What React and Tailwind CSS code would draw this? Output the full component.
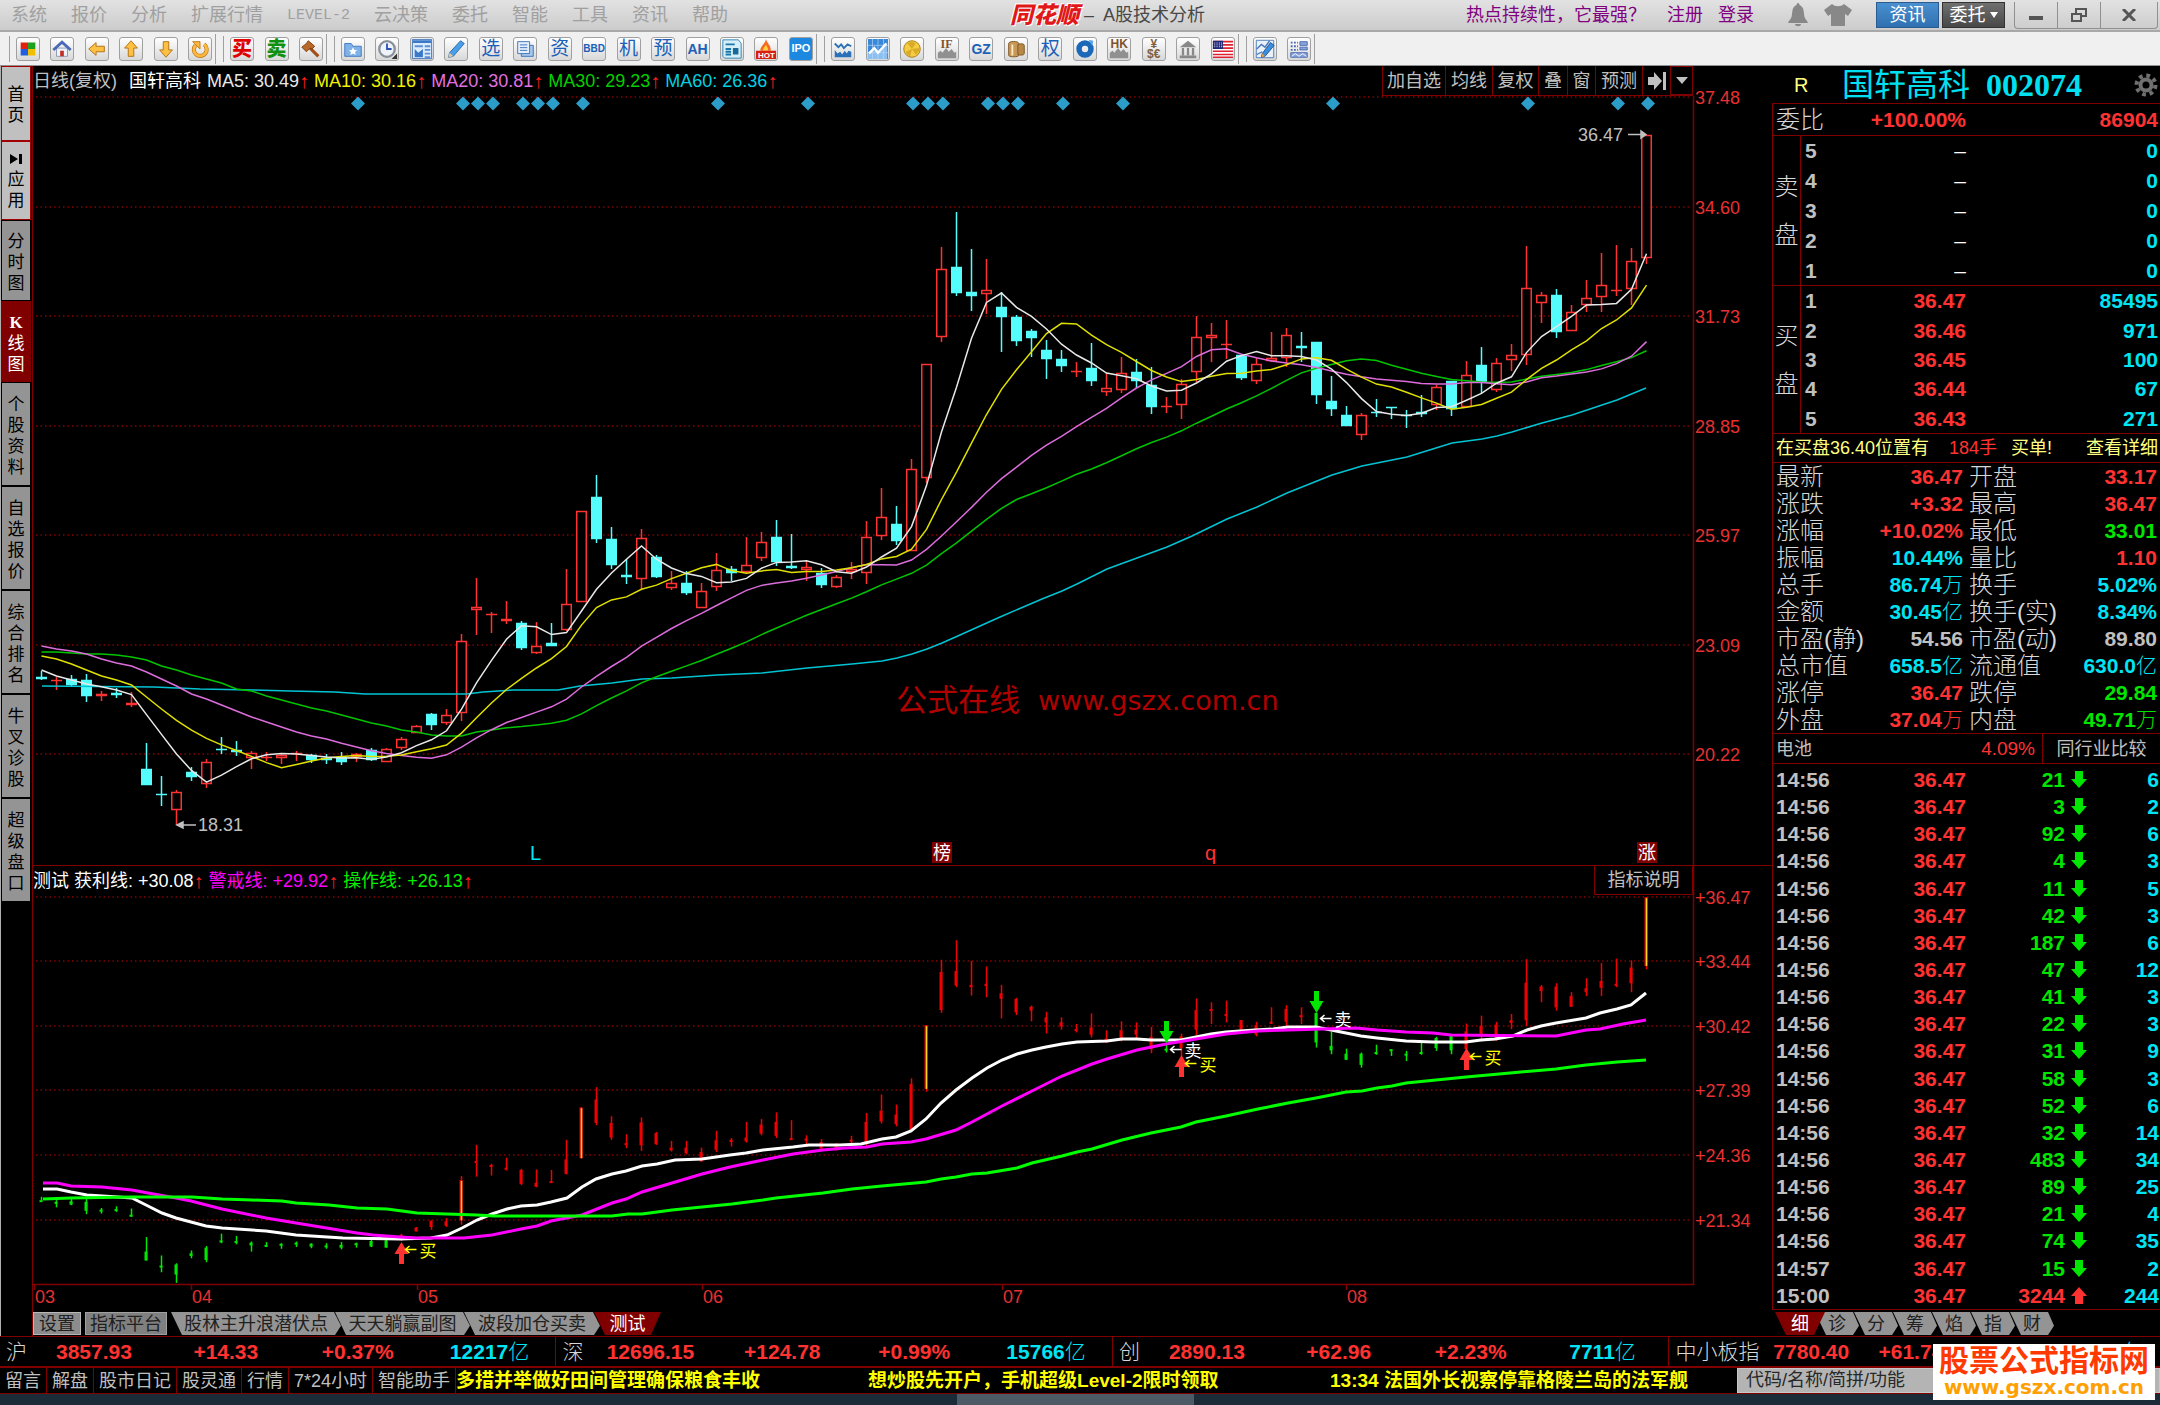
import React, { useState } from "react";
import clsx from "clsx";

const MENU = ["系统", "报价", "分析", "扩展行情", "LEVEL-2", "云决策", "委托", "智能", "工具", "资讯", "帮助"];

const SIDE_TABS = [
  { label: "首页", cls: "h-[75px] bg-[#c0c0c0] border-[#a00000]" },
  { label: "应用", icon: true, cls: "h-[79px] bg-[#c0c0c0] border-[#a00000]" },
  { label: "分时图", cls: "h-[81px] bg-[#949494] border-black" },
  { label: "K线图", active: true, cls: "h-[81px] bg-[#800000] text-white border-[#800000]" },
  { label: "个股资料", cls: "h-[104px] bg-[#949494] border-black" },
  { label: "自选报价", cls: "h-[104px] bg-[#949494] border-black" },
  { label: "综合排名", cls: "h-[104px] bg-[#949494] border-black" },
  { label: "牛叉诊股", cls: "h-[104px] bg-[#949494] border-black" },
  { label: "超级盘口", cls: "h-[104px] bg-[#949494] border-black" },
];

// [high, body top, body bottom, low, up?]
const BARS = [
  [671, 677, 679, 680, 0], [677, 680, 681, 690, 1], [675, 679, 685, 686, 0], [674, 680, 696, 702, 0],
  [691, 694, 696, 701, 1], [688, 693, 695, 698, 0], [692, 703, 705, 707, 1], [743, 769, 785, 785, 0],
  [776, 794, 795, 806, 0], [790, 792, 810, 825, 1], [767, 772, 777, 781, 0], [759, 762, 784, 788, 1],
  [737, 749, 750, 754, 0], [741, 750, 752, 756, 0], [751, 753, 758, 769, 1], [752, 757, 758, 761, 1],
  [754, 755, 758, 764, 1], [751, 753, 754, 761, 1], [754, 755, 760, 763, 0], [754, 758, 760, 764, 0],
  [752, 757, 762, 765, 0], [753, 754, 757, 762, 1], [748, 750, 760, 761, 0], [748, 749, 762, 762, 1],
  [737, 739, 748, 750, 1], [725, 726, 733, 733, 1], [713, 714, 725, 730, 0], [709, 715, 723, 725, 1],
  [634, 641, 713, 721, 1], [578, 607, 610, 635, 1], [612, 614, 615, 633, 1], [601, 619, 621, 624, 1],
  [621, 623, 648, 650, 0], [622, 646, 653, 654, 1], [623, 643, 646, 646, 0], [569, 604, 630, 631, 1],
  [511, 511, 602, 602, 1], [475, 497, 539, 543, 0], [527, 539, 565, 569, 0], [559, 575, 577, 584, 0],
  [529, 538, 579, 589, 1], [555, 557, 577, 578, 0], [571, 583, 588, 590, 1], [571, 583, 593, 595, 0],
  [583, 591, 608, 608, 1], [553, 570, 587, 591, 1], [566, 569, 573, 581, 0], [537, 565, 572, 574, 1],
  [532, 542, 558, 561, 1], [520, 537, 562, 566, 0], [534, 566, 568, 569, 0], [561, 567, 570, 581, 1],
  [568, 573, 585, 588, 0], [575, 577, 587, 588, 1], [562, 569, 572, 579, 1], [521, 537, 573, 584, 1],
  [488, 517, 536, 540, 1], [506, 524, 541, 545, 0], [459, 469, 551, 551, 1], [364, 364, 478, 483, 1],
  [247, 269, 337, 342, 1], [212, 267, 293, 296, 0], [249, 292, 296, 311, 0], [259, 290, 294, 314, 1],
  [292, 307, 317, 352, 0], [315, 317, 341, 346, 0], [329, 331, 338, 357, 0], [340, 350, 359, 379, 0],
  [350, 359, 366, 372, 0], [362, 371, 372, 377, 1], [343, 368, 381, 386, 0], [373, 388, 392, 396, 1],
  [357, 373, 390, 393, 1], [359, 372, 381, 388, 0], [367, 385, 407, 414, 0], [397, 406, 407, 413, 1],
  [379, 384, 405, 419, 1], [316, 337, 372, 382, 1], [323, 335, 338, 362, 1], [320, 344, 345, 359, 1],
  [355, 355, 378, 380, 0], [358, 364, 381, 384, 1], [332, 358, 361, 362, 1], [328, 335, 358, 367, 1],
  [332, 346, 348, 362, 0], [342, 342, 395, 404, 0], [376, 401, 409, 416, 0], [406, 415, 426, 426, 0],
  [413, 415, 435, 440, 1], [399, 412, 413, 417, 0], [407, 407, 408, 419, 0], [410, 415, 416, 428, 0],
  [395, 412, 414, 417, 0], [385, 387, 405, 410, 1], [381, 381, 409, 416, 0], [361, 375, 407, 407, 1],
  [347, 365, 382, 393, 0], [358, 363, 390, 392, 1], [344, 355, 360, 371, 1], [246, 288, 355, 365, 1],
  [292, 295, 303, 323, 1], [289, 295, 332, 338, 0], [305, 312, 331, 331, 1], [280, 298, 305, 312, 1],
  [253, 285, 297, 312, 1], [245, 290, 291, 296, 1], [248, 261, 289, 305, 1], [135, 135, 258, 264, 1],
];

// values that precede the first full averaging window
const LEAD = {
  5: [670, 676, 680, 684],
  10: [656, 659, 664, 670, 676, 680, 685, 697, 709],
  20: [646, 649, 651, 654, 659, 663, 666, 672, 679, 686, 694, 699, 705, 711, 717, 722, 727, 732, 736],
  30: [652, 652, 653, 654, 654, 655, 657, 660, 666, 670, 675, 679, 683, 689, 691, 696, 700, 704, 708, 711, 715, 719, 723, 726, 730, 732, 735, 736, 736],
};

const MA60 =
  "42,686 154,687 200,689 252,690 290,691 335,692 365,694 467,694 483,692 513,690 558,690 580,686 612,683 642,679 672,678 717,675 762,673 807,668 852,664 882,661 897,658 912,654 927,649 942,643 960,635 1000,617 1042,599 1062,591 1077,584 1107,569 1137,558 1167,547 1192,536 1227,519 1257,507 1287,493 1317,481 1332,475 1362,466 1407,457 1452,443 1482,439 1497,436 1512,432 1542,423 1572,415 1602,405 1617,400 1646,388";

const PROFIT =
  "43,1189 57,1189 71,1192 87,1195 118,1197 132,1198 148,1206 162,1213 176,1218 191,1222 206,1226 222,1228 266,1231 296,1235 343,1238 400,1239 431,1238 447,1235 462,1228 477,1220 492,1214 507,1209 521,1206 537,1205 551,1202 567,1198 582,1187 596,1179 612,1174 626,1171 642,1166 657,1164 675,1160 702,1159 730,1155 746,1153 763,1150 793,1147 809,1145 840,1145 861,1144 882,1139 896,1137 911,1131 926,1119 941,1103 956,1090 972,1078 987,1068 1002,1060 1017,1054 1032,1050 1046,1047 1062,1044 1077,1042 1107,1041 1122,1039 1137,1039 1151,1040 1181,1040 1196,1037 1211,1034 1226,1032 1255,1030 1273,1029 1288,1027 1316,1027 1331,1030 1346,1033 1361,1036 1377,1038 1406,1041 1433,1042 1466,1042 1481,1040 1495,1039 1513,1036 1527,1030 1541,1026 1556,1023 1586,1018 1600,1013 1617,1009 1631,1005 1646,993";
const WARNING =
  "43,1183 57,1183 71,1186 102,1187 132,1190 148,1193 176,1198 191,1201 222,1209 266,1218 296,1223 357,1233 373,1235 400,1237 417,1238 464,1238 492,1235 521,1229 537,1226 551,1221 582,1215 612,1203 626,1199 642,1192 672,1183 702,1174 730,1167 763,1160 793,1154 823,1150 845,1148 867,1147 882,1144 911,1142 926,1139 956,1130 972,1122 1002,1106 1032,1091 1062,1076 1092,1064 1107,1059 1137,1050 1166,1044 1196,1039 1226,1034 1258,1031 1288,1030 1356,1028 1377,1030 1406,1032 1433,1033 1451,1035 1556,1036 1571,1033 1586,1030 1600,1029 1623,1024 1646,1020";
const ACTION =
  "43,1199 71,1198 132,1197 192,1197 222,1199 252,1200 282,1201 296,1203 329,1205 357,1208 387,1209 417,1213 477,1215 494,1216 612,1216 628,1214 642,1214 672,1210 702,1207 732,1204 763,1200 776,1198 823,1193 852,1189 882,1186 926,1182 941,1179 956,1177 972,1174 987,1173 1017,1168 1032,1163 1062,1156 1077,1152 1092,1149 1122,1140 1151,1133 1181,1127 1196,1122 1226,1116 1258,1109 1288,1103 1316,1098 1346,1092 1362,1091 1377,1088 1392,1086 1406,1083 1436,1080 1466,1077 1510,1073 1556,1069 1586,1065 1617,1062 1646,1060";

const DIAMONDS = [358, 463, 478, 493, 523, 538, 553, 583, 718, 808, 913, 928, 943, 988, 1003, 1018, 1063, 1123, 1333, 1528, 1618, 1648];

const barX = (i) => 41.5 + 15 * i;
const lowerY = (y) => 897 + (y - 134.7) * 0.559;
const isGreen = (i) => i < 24 || i === 75 || (i >= 85 && i <= 94);
const LIMIT_UP = [28, 36, 59, 107];

function movingAverage(n) {
  const closes = BARS.map((b) => (b[4] ? b[1] : b[2]));
  return closes
    .map((_, i) => {
      const y = i < n - 1 ? LEAD[n][i] : closes.slice(i - n + 1, i + 1).reduce((a, b) => a + b, 0) / n;
      return `${barX(i)},${y.toFixed(1)}`;
    })
    .join(" ");
}

const QUOTES = [
  ["最新", "36.47", "", "r", "开盘", "33.17", "", "r"],
  ["涨跌", "+3.32", "", "r", "最高", "36.47", "", "r"],
  ["涨幅", "+10.02%", "", "r", "最低", "33.01", "", "g"],
  ["振幅", "10.44%", "", "c", "量比", "1.10", "", "r"],
  ["总手", "86.74", "万", "c", "换手", "5.02%", "", "c"],
  ["金额", "30.45", "亿", "c", "换手(实)", "8.34%", "", "c"],
  ["市盈(静)", "54.56", "", "w", "市盈(动)", "89.80", "", "w"],
  ["总市值", "658.5", "亿", "c", "流通值", "630.0", "亿", "c"],
  ["涨停", "36.47", "", "r", "跌停", "29.84", "", "g"],
  ["外盘", "37.04", "万", "r", "内盘", "49.71", "万", "g"],
];

const TICKS = [
  ["14:56", 21, 6], ["14:56", 3, 2], ["14:56", 92, 6], ["14:56", 4, 3], ["14:56", 11, 5],
  ["14:56", 42, 3], ["14:56", 187, 6], ["14:56", 47, 12], ["14:56", 41, 3], ["14:56", 22, 3],
  ["14:56", 31, 9], ["14:56", 58, 3], ["14:56", 52, 6], ["14:56", 32, 14], ["14:56", 483, 34],
  ["14:56", 89, 25], ["14:56", 21, 4], ["14:56", 74, 35], ["14:57", 15, 2], ["15:00", 3244, 244, true],
];

const INDEXES = [
  ["沪", "3857.93", "+14.33", "+0.37%", "12217"],
  ["深", "12696.15", "+124.78", "+0.99%", "15766"],
  ["创", "2890.13", "+62.96", "+2.23%", "7711"],
  ["中小板指", "7780.40", "+61.74", "+0.80%", "1648"],
];

const TONE = {
  r: "text-[#ff3232]",
  g: "text-[#00e600]",
  c: "text-[#00e4f4]",
  w: "text-[#c0c0c0]",
};

const ICONS = {
  win: (
    <>
      <path fill="#e02010" d="M4 5h8v7H4z" />
      <path fill="#20a020" d="M12 5h8v7h-8z" />
      <path fill="#2060e0" d="M4 12h8v7H4z" />
      <path fill="#f0c000" d="M12 12h8v7h-8z" />
    </>
  ),
  home: (
    <>
      <path fill="#eef3fb" stroke="#8a96b0" d="M6 11h12v9H6z" />
      <path fill="none" stroke="#4a68b8" strokeWidth="3" d="M2.500 13 12 4.500 21.500 13" />
      <path fill="#c03028" d="M10 14h4v6h-4z" />
    </>
  ),
  left: <path fill="#fdc043" stroke="#b07010" d="M3 12l8-7v4h9v6h-9v4z" />,
  up: <path fill="#fdc043" stroke="#b07010" d="M12 3l7 8h-4v9H9v-9H5z" />,
  down: <path fill="#fdc043" stroke="#b07010" d="M12 21l7-8h-4V4H9v9H5z" />,
  refresh: (
    <>
      <path fill="none" stroke="#c07810" strokeWidth="4.500" d="M16.500 7A7 7 0 1 1 7 8" />
      <path fill="none" stroke="#fdb840" strokeWidth="3" d="M16.500 7A7 7 0 1 1 7 8" />
      <path fill="#fdb840" stroke="#c07810" d="M4 4h8v8z" />
    </>
  ),
  hammer: (
    <>
      <path stroke="#a05018" strokeWidth="3.500" d="M11 11l9 9" />
      <path fill="#b86828" stroke="#7a3c10" d="M9 3l7 6-3 3-2-1-4 4-5-5 5-4z" />
    </>
  ),
  folder: (
    <>
      <path fill="#7fb2e8" stroke="#3f78c0" d="M3 6h7l2 3h9v11H3z" />
      <path fill="#fff" d="M12 10l1.400 3 3.200.300-2.400 2.100.800 3.200-3-1.700-3 1.700.800-3.200-2.400-2.100 3.200-.300z" />
    </>
  ),
  clock: (
    <>
      <circle cx="12" cy="12" r="8.500" fill="#eef3fb" stroke="#8a9098" strokeWidth="2.500" />
      <path fill="none" stroke="#2a50b0" strokeWidth="2" d="M12 6v6h5" />
      <path fill="#333" d="M23 17v6h-6z" />
    </>
  ),
  board: (
    <>
      <path fill="#dcebfb" stroke="#3a6cb4" d="M1.500 1.500h21v21h-21z" />
      <path stroke="#3a78c8" strokeWidth="3" d="M2 4h20" />
      <path stroke="#5a90d8" strokeWidth="2" d="M4 9h9M15 9h6M15 13h6M15 17h6M15 21h6" />
      <path fill="#3a78c8" d="M4 12l4 4 5-4v9H4z" />
    </>
  ),
  pen: (
    <>
      <path fill="#4aa0e8" stroke="#2866a8" d="M17 3l4 3-12 14-5 1 1-5z" />
      <path fill="#f0c890" d="M5 16l4 4-5 1z" />
    </>
  ),
  docs: (
    <>
      <path fill="#a8c8ec" stroke="#3a70b8" d="M8 8h13v12H8z" />
      <path fill="#e6f0fb" stroke="#3a70b8" d="M4 4h13v13H4z" />
      <path stroke="#3a70b8" d="M6.500 7.500h8M6.500 10.500h8M6.500 13.500h8" />
    </>
  ),
  news: (
    <>
      <path fill="#d6eef8" stroke="#2a80b0" d="M2 2h17l3 4v16H4l-2-2z" />
      <path stroke="#1878a8" strokeWidth="2" d="M5 7h10M5 12h6M5 15h6M5 18h6" />
      <path fill="#186898" d="M13 11h6v7h-6z" />
    </>
  ),
  hot: (
    <>
      <path fill="#f86820" d="M12 1c1 5 6 7 5 13H6c-1-5 5-7 6-13z" />
      <path fill="#ffd040" d="M12 7c1 3 3 4 2 7H9c-1-3 2-4 3-7z" />
      <path fill="#d82010" d="M1 14h22v9H1z" />
    </>
  ),
  wave: (
    <>
      <path fill="none" stroke="#2a70b8" strokeWidth="2" d="M3 6l4 4 3-3 3 4 4-4 4 2" />
      <path fill="#2a70b8" d="M3 21v-8l3 4 3-2 2 3 3-4 2 3 2-3 3 1v6z" />
    </>
  ),
  trend: (
    <>
      <path fill="#3a88d8" d="M1 1h22v22H1z" />
      <path fill="#8cc0f0" d="M1 18l7-7 4 5 10-11v18H1z" />
      <path stroke="#b8d8f8" strokeWidth=".7" d="M6 1v22M12 1v22M18 1v22M1 8h22M1 16h22" />
      <path fill="none" stroke="#fff" strokeWidth="2.500" d="M2 17l6-6 4 5 9-10" />
    </>
  ),
  coin: (
    <>
      <circle cx="12" cy="12" r="9" fill="#f6cc40" stroke="#a87c10" />
      <path fill="#d8ac28" d="M12 12L7 6a8 8 0 0 1 9 0zM12 12l-7 3a8 8 0 0 0 5 5zM12 12l8-1a8 8 0 0 1-4 7z" />
    </>
  ),
  barrel: (
    <>
      <path fill="#c89858" stroke="#7a5420" d="M4 6c0-3 11-3 11 0v13c0 2-11 2-11 0z" />
      <path fill="#b88848" stroke="#7a5420" d="M14 7c2-1 7-1 7 1v9c0 2-5 2-7 1z" />
      <path stroke="#fbe8c0" strokeWidth="2" d="M8 7v12" />
    </>
  ),
  ring: (
    <>
      <circle cx="12" cy="12" r="6.500" fill="none" stroke="#1c68b8" strokeWidth="6" />
      <path fill="#5aa4e8" d="M16 2l5 1-1 6z" />
    </>
  ),
  hills: <path fill="#909090" d="M2 22v-6l3-2 2 2 4-5 3 4 3-3 3 4 2-1v7z" />,
  bank: (
    <>
      <path fill="#888" d="M12 3l9 7H3zM3 19h18v3H3z" />
      <path stroke="#888" strokeWidth="2.500" d="M6.500 11v8M12 11v8M17.500 11v8" />
    </>
  ),
  flag: (
    <>
      <path fill="#fff" d="M1 3h22v18H1z" />
      <path stroke="#e02030" strokeWidth="1.800" d="M1 4h22M1 7.500h22M1 11h22M1 14.500h22M1 18h22M1 21h22" />
      <path fill="#202878" d="M1 3h11v9H1z" />
      <path stroke="#fff" strokeDasharray="1 1.500" d="M2.500 5.500h9M2.500 7.500h9M2.500 9.500h9" />
    </>
  ),
  edit: (
    <>
      <path fill="#e8f0fa" stroke="#4a78b8" d="M2.500 2.500h19v19h-19z" />
      <path fill="none" stroke="#4a78b8" strokeWidth="1.500" d="M3 12l5-5 4 3 5-7M3 18l6-3" />
      <path fill="#3a90e0" stroke="#284f88" d="M18 5l4 3-10 12-4 1 1-4z" />
      <path fill="#e8a040" d="M9 17l3 3-4 1z" />
    </>
  ),
  layout: (
    <>
      <path stroke="#4a68b0" strokeDasharray="2 1.500" strokeWidth="2" d="M3 5h8M3 9h8M3 13h8" />
      <path fill="#88a4dc" stroke="#4a68b0" d="M13 4h8v4h-8zM13 10h8v3h-8zM3 16h18v5H3z" />
      <path fill="none" stroke="#fff" d="M4 20l4-3 4 3 4-3 4 3" />
    </>
  ),
  money: <path stroke="#a08868" d="M5 22h14" />,
};

const TOOL_GROUPS = [
  { width: "w-[196px]", items: [{ icon: "win" }, { icon: "home" }, { icon: "left" }, { icon: "up" }, { icon: "down" }, { icon: "refresh" }] },
  { width: "w-[93px]", items: [{ text: "买", cls: "text-[20px] font-black text-[#e00000]" }, { text: "卖", cls: "text-[20px] font-black text-[#109010]" }, { icon: "hammer" }] },
  {
    width: "w-[472px]",
    items: [
      { icon: "folder" }, { icon: "clock" }, { icon: "board" }, { icon: "pen" },
      { text: "选", cls: "text-[19px] text-[#1c60b8]" }, { icon: "docs" },
      { text: "资", cls: "text-[19px] text-[#1c60b8]" },
      { text: "BBD", cls: "text-[10px] font-bold text-[#1c60b8]" },
      { text: "机", cls: "text-[19px] text-[#1c60b8]" }, { text: "预", cls: "text-[19px] text-[#1c60b8]" },
      { text: "AH", cls: "text-[14px] font-bold text-[#1c60b8]" }, { icon: "news" },
      { icon: "hot", text: "HOT", cls: "text-[8px] font-bold text-white pt-[14px]" },
      { text: "IPO", cls: "text-[11px] font-bold text-white", fill: true },
    ],
  },
  {
    width: "w-[404px]",
    items: [
      { icon: "wave" }, { icon: "trend" }, { icon: "coin" },
      { icon: "hills", text: "IF", cls: "text-[12px] font-bold text-[#80522a] pb-[9px] font-['Liberation_Serif']" },
      { text: "GZ", cls: "text-[14px] font-bold text-[#1c60b8]" }, { icon: "barrel" },
      { text: "权", cls: "text-[19px] text-[#1c60b8]" }, { icon: "ring" },
      { icon: "hills", text: "HK", cls: "text-[12px] font-bold text-[#80522a] pb-[9px]" },
      { text: "¥ $€", cls: "w-[16px] text-center text-[12px] leading-[10px] font-bold text-[#80603c]" }, { icon: "bank" }, { icon: "flag" },
    ],
  },
  { width: "w-[58px]", items: [{ icon: "edit" }, { icon: "layout" }] },
];

function ToolButton({ icon, text, cls, fill }) {
  return (
    <button
      type="button"
      aria-label={text || icon}
      className={clsx(
        "grid h-6 w-6 place-items-center overflow-hidden rounded-[3px] border border-[#a0a0a0] leading-none",
        fill ? "bg-[#1c88e0]" : "bg-linear-to-b from-white to-[#d8d8d8]"
      )}
    >
      {icon && (
        <svg viewBox="0 0 24 24" className="col-start-1 row-start-1 h-[22px] w-[22px]">
          {ICONS[icon]}
        </svg>
      )}
      {text && <span className={clsx("col-start-1 row-start-1", cls)}>{text}</span>}
    </button>
  );
}

function TitleBar() {
  return (
    <header className="flex h-[32px] items-center justify-between border-b-2 border-[#a8a8a8] bg-linear-to-b from-[#e2e2e2] to-[#cccccc] text-[18px] leading-none">
      <nav className="flex flex-1 items-center gap-6 pl-[11px] text-[#a0a0a0]">
        {MENU.map((m) => (
          <button key={m} type="button" className={m === "LEVEL-2" ? "font-['Liberation_Mono'] text-[15px]" : ""}>
            {m}
          </button>
        ))}
      </nav>
      <h1 className="ml-11 flex items-center gap-[5px] text-[#484848]">
        <span className="text-[23px] font-black italic text-[#e01818] [text-shadow:0_0_2px_#fff,1px_1px_0_#fff,-1px_-1px_0_#fff]">
          同花顺
        </span>
        <span>–&nbsp; A股技术分析</span>
      </h1>
      <div className="flex flex-1 items-center justify-end">
        <a href="#hot" className="mr-[21px] text-[#800080]">热点持续性，它最强？</a>
        <a href="#register" className="mr-[15px] text-[#800080]">注册</a>
        <a href="#login" className="mr-[33px] text-[#800080]">登录</a>
        <svg viewBox="0 0 22 24" className="mr-[15px] h-6 w-[22px]" fill="#888">
          <path d="M11 0c1 0 1.500 1 1.500 2 5 2 4 8 5 12 .500 2 3 4 3.500 6H1c.500-2 3-4 3.500-6 1-4 0-10 5-12C9.500 1 10 0 11 0zM8 21h6c0 3-6 3-6 0z" />
        </svg>
        <svg viewBox="0 0 28 22" className="mr-[24px] h-[22px] w-7" fill="#888">
          <path d="M8 0c3 3 9 3 12 0l8 6-4 6-3-2v12H7V10l-3 2-4-6z" />
        </svg>
        <button type="button" className="mr-[3px] h-[26px] w-[63px] border border-[#2a5c90] bg-linear-to-b from-[#4a90d0] to-[#3070b0] text-white">
          资讯
        </button>
        <button type="button" className="mr-[9px] flex h-[26px] w-[63px] items-center justify-center gap-1 border border-[#333] bg-linear-to-b from-[#707070] to-[#484848] text-white">
          委托
          <svg viewBox="0 0 8 6" className="h-[6px] w-2" fill="#fff"><path d="M0 0h8L4 6z" /></svg>
        </button>
        <div className="mr-[2px] flex h-[27px] rounded-b border border-t-0 border-[#909090] [&>button]:grid [&>button]:place-items-center">
          <button type="button" aria-label="最小化" className="w-[43px] border-r border-[#909090]">
            <svg viewBox="0 0 14 14" className="h-[14px] w-[14px]"><path fill="#555" d="M0 8h14v4H0z" /></svg>
          </button>
          <button type="button" aria-label="还原" className="w-[43px] border-r border-[#909090]">
            <svg viewBox="0 0 16 14" className="h-[14px] w-4" fill="none" stroke="#555" strokeWidth="2">
              <path d="M1 6h9v7H1zM5 5V1h10v7h-4" />
            </svg>
          </button>
          <button type="button" aria-label="关闭" className="w-[56px]">
            <svg viewBox="0 0 14 12" className="h-3 w-[14px]"><path stroke="#555" strokeWidth="3" d="M1 0l12 12M13 0L1 12" /></svg>
          </button>
        </div>
      </div>
    </header>
  );
}

function Toolbar() {
  return (
    <div className="flex h-[34px] items-center border-b border-[#909090] bg-[#f0f0f0]">
      {TOOL_GROUPS.map((g, i) => (
        <div key={i} className={clsx("flex h-[30px] items-center border-r border-[#a0a0a0] pr-[3px]", i === 0 ? "pl-[8px]" : "pl-[6px]")}>
          <span className="mr-[6px] h-[26px] w-[2px] border-r border-[#a0a0a0]" />
          <div className={clsx("flex justify-between", g.width)}>
            {g.items.map((t, j) => (
              <ToolButton key={j} {...t} />
            ))}
          </div>
        </div>
      ))}
    </div>
  );
}

function Sidebar() {
  return (
    <aside className="w-[33px] shrink-0 border-r border-l border-r-[#800000] border-l-[#b0b0b0]">
      {SIDE_TABS.map((t) => (
        <button
          key={t.label}
          type="button"
          className={clsx("flex w-[30px] flex-col items-center justify-center border pt-[3px] text-[17px] leading-[21px]", t.active ? "" : "text-black", t.cls)}
        >
          {t.icon && (
            <svg viewBox="0 0 12 12" className="mb-1 h-3 w-3"><path d="M0 1l8 5-8 5zM9 1h3v10H9z" /></svg>
          )}
          {[...t.label].map((ch, i) => (
            <span key={i} className={ch === "K" ? "font-['Liberation_Serif'] font-bold" : ""}>{ch}</span>
          ))}
        </button>
      ))}
    </aside>
  );
}

function Up() {
  return <span className="mr-[5px] w-[10px] text-center text-[20px] text-[#ff2020]">↑</span>;
}

function PriceChart() {
  const axis = [
    ["37.48", 97], ["34.60", 207], ["31.73", 316], ["28.85", 426], ["25.97", 535], ["23.09", 645], ["20.22", 754],
  ];
  return (
    <svg viewBox="33 96 1739 769" className="block w-full overflow-visible text-[18px]">
      {axis.map(([label, y]) => (
        <g key={label}>
          <path d={`M36 ${y}H1692`} stroke="#840000" strokeWidth="1.500" strokeDasharray="1.500 3" />
          <text x="1695" y={y + 7} fill="#e83030">{label}</text>
        </g>
      ))}
      <path d="M1693.500 96V865" stroke="#800000" strokeWidth="1.500" />
      {DIAMONDS.map((x) => (
        <path key={x} fill="#2c9cc8" d={`M${x - 7} 103.500l7-7 7 7-7 7z`} />
      ))}
      {BARS.map(([h, t, b, l, up], i) => {
        const x = barX(i);
        const color = up ? "#ff3232" : "#54fcfc";
        return (
          <g key={i} stroke={color} strokeWidth="1.500">
            <path d={`M${x} ${h}V${t}M${x} ${b}V${l}`} />
            {b - t < 2 ? (
              <path d={`M${x - 5.5} ${t + 0.5}h11`} />
            ) : (
              <rect x={x - 4.75} y={t + 0.5} width="9.500" height={b - t - 1} fill={up ? "#000" : color} />
            )}
          </g>
        );
      })}
      <g fill="none" strokeWidth="1.500">
        <polyline points={MA60} stroke="#00c4d4" />
        <polyline points={movingAverage(30)} stroke="#00c400" />
        <polyline points={movingAverage(20)} stroke="#dc6cdc" />
        <polyline points={movingAverage(10)} stroke="#e0e000" />
        <polyline points={movingAverage(5)} stroke="#e8e8e8" />
      </g>
      <g stroke="#c0c0c0" fill="#c0c0c0">
        <path d="M177 825h19M177 825l6-3v6zM1628 134.500h17M1646 134.500l-5-3.500v7z" strokeWidth="1.500" />
      </g>
      <text x="198" y="831" fill="#c0c0c0">18.31</text>
      <text x="1578" y="141" fill="#c0c0c0">36.47</text>
      <text x="896" y="711" fill="#b00000" className="text-[31px]">公式在线</text>
      <text x="1038" y="710" fill="#b00000" className="font-['DejaVu_Sans'] text-[27px]">www.gszx.com.cn</text>
      <text x="530" y="860" fill="#00e4f4" className="text-[20px]">L</text>
      <path fill="#800000" d="M932 842h20v21h-20zM1637 842h20v21h-20z" />
      <text x="933" y="859" fill="#fff">榜</text>
      <text x="1638" y="859" fill="#fff">涨</text>
      <text x="1205" y="860" fill="#ff3232" className="text-[20px]">q</text>
    </svg>
  );
}

function Signal({ x, y, sell, textY }) {
  const color = sell ? "#fff" : "#ffff00";
  return (
    <g>
      {sell ? (
        <path fill="#00e600" d={`M${x - 2.5} ${y}h5v10h4.500l-7 12-7-12h4.500z`} />
      ) : (
        <path fill="#ff3232" d={`M${x - 2.5} ${y + 22}h5V${y + 12}h4.500l-7-12-7 12h4.500z`} />
      )}
      <path d={`M${x + 15} ${textY - 7.5}h-11m4-3.500l-4 3.500 4 3.500`} fill="none" stroke={color} strokeWidth="1.500" />
      <text x={x + 18} y={textY} fill={color} className="text-[17px]">
        {sell ? "卖" : "买"}
      </text>
    </g>
  );
}

function IndicatorChart() {
  const axis = [["+36.47", 897], ["+33.44", 961], ["+30.42", 1026], ["+27.39", 1090], ["+24.36", 1155], ["+21.34", 1220]];
  const months = [["03", 34], ["04", 191], ["05", 417], ["06", 702], ["07", 1002], ["08", 1346]];
  return (
    <svg viewBox="33 896 1739 412" className="block w-full overflow-visible text-[18px]">
      {axis.map(([label, y]) => (
        <g key={label}>
          <path d={`M36 ${y}H1692`} stroke="#840000" strokeWidth="1.500" strokeDasharray="1.500 3" />
          <text x="1695" y={y + 7} fill="#e83030">{label}</text>
        </g>
      ))}
      <path d="M1693.500 866V1284.500H32" fill="none" stroke="#800000" strokeWidth="1.500" />
      {months.map(([m, x]) => (
        <g key={m}>
          <path d={`M${x + 0.5} 1285v5`} stroke="#800000" strokeWidth="1.500" />
          <text x={x + 1} y="1303" fill="#e83030">{m}</text>
        </g>
      ))}
      {BARS.map(([h, t, b, l], i) => {
        const x = barX(i);
        const limit = LIMIT_UP.includes(i);
        return (
          <g key={i} stroke={isGreen(i) ? "#00e800" : "#f00000"}>
            <path d={`M${x} ${lowerY(h)}V${lowerY(l)}`} strokeWidth="1.500" />
            <path d={`M${x - 0.5} ${lowerY(t)}V${Math.max(lowerY(b), lowerY(t) + 2)}`} strokeWidth="3" />
            {limit && <path d={`M${x} ${lowerY(t) + 1}V${lowerY(b)}`} stroke="#ffd020" strokeWidth="1.500" />}
          </g>
        );
      })}
      <g fill="none" strokeWidth="3">
        <polyline points={PROFIT} stroke="#ffffff" />
        <polyline points={WARNING} stroke="#ff00ff" />
        <polyline points={ACTION} stroke="#00ff00" />
      </g>
      <Signal x={401.5} y={1242} textY={1257} />
      <Signal x={1181.5} y={1055} textY={1071} />
      <Signal x={1466.5} y={1048} textY={1064} />
      <Signal x={1166.5} y={1021} textY={1057} sell />
      <Signal x={1316.5} y={991} textY={1026} sell />
    </svg>
  );
}

function ChartHeader() {
  return (
    <div className="flex h-[30px] items-stretch justify-between text-[18px] leading-none">
      <p className="flex items-center whitespace-nowrap">
        <span className="mr-[12px] text-[#c0c0c0]">日线(复权)</span>
        <span className="mr-[6px] text-white">国轩高科</span>
        <span className="text-[#e8e8e8]">MA5: 30.49</span><Up />
        <span className="text-[#f0f000]">MA10: 30.16</span><Up />
        <span className="text-[#e070e0]">MA20: 30.81</span><Up />
        <span className="text-[#00d000]">MA30: 29.23</span><Up />
        <span className="text-[#00d0e0]">MA60: 26.36</span><Up />
      </p>
      <div className="mr-[79px] flex border-b border-[#800000] text-[#c0c0c0] [&>button]:border-l [&>button]:border-[#800000]">
        <button type="button" className="w-[63px]">加自选</button>
        <button type="button" className="w-[47px]">均线</button>
        <button type="button" className="w-[46px]">复权</button>
        <button type="button" className="w-[29px]">叠</button>
        <button type="button" className="w-[28px]">窗</button>
        <button type="button" className="w-[47px]">预测</button>
        <button type="button" aria-label="最新" className="grid w-[28px] place-items-center">
          <svg viewBox="0 0 20 18" className="h-[18px] w-5" fill="#c0c0c0">
            <path d="M1 5h6V0l8 9-8 9v-5H1zM16 0h3v18h-3z" />
          </svg>
        </button>
        <button type="button" aria-label="更多" className="grid w-[23px] place-items-center border border-[#c00000]">
          <svg viewBox="0 0 12 7" className="h-[7px] w-3" fill="#c0c0c0"><path d="M0 0h12L6 7z" /></svg>
        </button>
      </div>
    </div>
  );
}

function FormulaTabs() {
  const [active, setActive] = useState("测试");
  const tabs = [
    ["股林主升浪潜伏点", "w-[170px]"],
    ["天天躺赢副图", "w-[135px]"],
    ["波段加仓买卖", "w-[136px]"],
    ["测试", "w-[67px]"],
  ];
  return (
    <div className="mt-1 flex h-6 items-start text-[18px] leading-none text-[#202020]">
      <button type="button" className="mr-1 h-[23px] w-[48px] border border-[#b8b8b8] bg-[#8c8c8c]">设置</button>
      <button type="button" className="mr-[4px] h-[23px] w-[82px] border border-[#a0a0a0] bg-[#808080]">指标平台</button>
      {tabs.map(([t, w]) => (
        <button
          key={t}
          type="button"
          onClick={() => setActive(t)}
          className={clsx(
            "mr-[-6px] h-[23px]",
            w,
            t === active
              ? "bg-[#800000] text-white [clip-path:polygon(0_0,100%_0,calc(100%-10px)_100%,11px_100%)]"
              : "bg-[#949494] [clip-path:polygon(0_0,calc(100%-7px)_0,100%_60%,calc(100%-6px)_100%,11px_100%)]"
          )}
        >
          {t}
        </button>
      ))}
    </div>
  );
}

function DepthBlock({ title, rows, className }) {
  return (
    <div className={clsx("flex border-b border-[#800000]", className)}>
      <div className="flex w-7 shrink-0 flex-col items-center justify-center gap-6 border-r border-[#800000] text-[24px] leading-none font-light text-[#d8d8d8]">
        {[...title].map((ch) => <span key={ch}>{ch}</span>)}
      </div>
      <table className="flex-1 table-fixed text-[21px] leading-none font-bold">
        <tbody>
          {rows.map(([n, price, vol]) => (
            <tr key={n}>
              <td className="w-[40px] pl-1 text-[#c0c0c0]">{n}</td>
              <td className={clsx("w-[125px] text-right", price === "–" ? "font-normal text-white" : TONE.r)}>{price}</td>
              <td className={clsx("pr-[2px] text-right", TONE.c)}>{vol}</td>
            </tr>
          ))}
        </tbody>
      </table>
    </div>
  );
}

function Value({ value, unit, tone }) {
  return (
    <td className={clsx("p-0 text-right text-[21px] font-bold whitespace-nowrap", TONE[tone])}>
      {value}
      {unit && <span className="font-light">{unit}</span>}
    </td>
  );
}

function QuotePanel() {
  const [tab, setTab] = useState("细");
  return (
    <aside className="flex w-[388px] shrink-0 flex-col leading-none">
      <div className="flex h-[37px] items-center">
        <span className="ml-[22px] w-[48px] text-[20px] text-[#ffff80]">R</span>
        <h2 className="flex flex-1 items-center gap-4 text-[32px] text-[#00e0f0]">
          国轩高科
          <span className="font-['Liberation_Serif'] font-bold">002074</span>
        </h2>
        <button type="button" aria-label="设置" className="mr-[2px]">
          <svg viewBox="0 0 24 24" className="h-6 w-6" fill="none" stroke="#707070">
            <circle cx="12" cy="12" r="5.500" strokeWidth="4" />
            <circle cx="12" cy="12" r="9.500" strokeWidth="4" strokeDasharray="3.730 3.730" />
          </svg>
        </button>
      </div>
      <div className="flex flex-1 flex-col border border-r-0 border-[#800000]">
        <div className="flex h-[32px] items-center border-b border-[#800000] pr-[2px] text-[21px] font-bold text-[#ff3232]">
          <span className="pl-[3px] text-[24px] font-light text-[#d8d8d8]">委比</span>
          <span className="w-[142px] text-right">+100.00%</span>
          <span className="flex-1 text-right">86904</span>
        </div>
        <DepthBlock title="卖盘" className="h-[150px]" rows={[[5, "–", 0], [4, "–", 0], [3, "–", 0], [2, "–", 0], [1, "–", 0]]} />
        <DepthBlock
          title="买盘"
          className="h-[148px]"
          rows={[[1, "36.47", 85495], [2, "36.46", 971], [3, "36.45", 100], [4, "36.44", 67], [5, "36.43", 271]]}
        />
        <div className="flex h-[29px] items-center border-b border-[#800000] pr-[2px] pl-[3px] text-[18px] text-[#ffff80]">
          <span>在买盘36.40位置有</span>
          <span className="ml-5 text-[#ff3232]">184手</span>
          <span className="ml-[14px]">买单!</span>
          <a href="#detail" className="ml-auto">查看详细</a>
        </div>
        <table className="w-full table-fixed text-[#d8d8d8]">
          <colgroup>
            <col className="w-[90px]" />
            <col className="w-[100px]" />
            <col className="w-[100px]" />
            <col />
          </colgroup>
          <tbody>
            {QUOTES.map(([a, av, au, at, b, bv, bu, bt]) => (
              <tr key={a} className="h-[27px]">
                <th className="p-0 pl-[3px] text-left text-[24px] font-light whitespace-nowrap">{a}</th>
                <Value value={av} unit={au} tone={at} />
                <th className="p-0 pl-[6px] text-left text-[24px] font-light whitespace-nowrap">{b}</th>
                <td className="p-0 pr-[3px]">
                  <table className="w-full"><tbody><tr><Value value={bv} unit={bu} tone={bt} /></tr></tbody></table>
                </td>
              </tr>
            ))}
          </tbody>
        </table>
        <div className="flex h-[31px] items-center border-y border-[#800000] text-[18px] text-[#c0c0c0]">
          <span className="pl-[3px]">电池</span>
          <span className="ml-auto pr-[7px] text-[19px] text-[#ff3232]">4.09%</span>
          <button type="button" className="h-full w-[118px] border-l border-[#800000]">同行业比较</button>
        </div>
        <div className="grid flex-1 pt-[2px]">
          <table className="h-full w-full table-fixed text-[21px] font-bold">
            <tbody>
              {TICKS.map(([time, vol, n, up], i) => (
                <tr key={i}>
                  <td className="w-[93px] p-0 pl-[3px] text-[#c0c0c0]">{time}</td>
                  <td className="w-[100px] p-0 text-right text-[#ff3232]">36.47</td>
                  <td className={clsx("w-[99px] p-0 text-right", up ? TONE.r : TONE.g)}>{vol}</td>
                  <td className="w-[24px] p-0 pl-[6px]">
                    <svg viewBox="0 0 16 17" className={clsx("block h-[17px] w-4", up && "rotate-180")} fill={up ? "#ff3232" : "#00e600"}>
                      <path d="M4 0h8v8h4l-8 9-8-9h4z" />
                    </svg>
                  </td>
                  <td className={clsx("p-0 pr-[1px] text-right", TONE.c)}>{n}</td>
                </tr>
              ))}
            </tbody>
          </table>
        </div>
      </div>
      <div className="mt-[2px] flex h-6 items-start pl-[3px] text-[18px] text-[#202020]">
        {[..."细诊分筹焰指财"].map((t) => (
          <button
            key={t}
            type="button"
            onClick={() => setTab(t)}
            className={clsx(
              "mr-[-11px] h-[23px] w-[50px]",
              t === tab
                ? "relative z-10 bg-[#800000] text-white [clip-path:polygon(0_0,100%_0,calc(100%-11px)_100%,11px_100%)]"
                : "bg-[#949494] pr-1 [clip-path:polygon(1px_0,calc(100%-11px)_0,calc(100%-5px)_60%,calc(100%-11px)_100%,12px_100%)]"
            )}
          >
            {t}
          </button>
        ))}
      </div>
    </aside>
  );
}

function IndexBar() {
  return (
    <div className="flex h-8 items-stretch border-t border-b-2 border-[#800000] text-[21px] leading-none font-bold text-[#ff3232]">
      {INDEXES.map(([name, last, diff, pct, amount], i) => (
        <div key={name} className={clsx("flex min-w-0 items-center", i === 3 ? "flex-[491]" : "flex-[556]", i > 0 && "border-l border-[#800000]")}>
          <span className={clsx("shrink-0 pl-[6px] font-light text-[#d8d8d8]", i === 3 ? "w-[92px]" : "w-7")}>{name}</span>
          <span className="flex-1 text-center">{last}</span>
          <span className="flex-1 text-center">{diff}</span>
          <span className="flex-1 text-center">{pct}</span>
          <span className="flex-1 text-center whitespace-nowrap text-[#00e4f4]">
            {amount}<span className="font-light">亿</span>
          </span>
        </div>
      ))}
    </div>
  );
}

function NewsBar() {
  return (
    <footer className="flex h-[26px] items-stretch border-b border-[#800000] text-[18px] leading-none text-[#c0c0c0]">
      {["留言", "解盘", "股市日记", "股灵通", "行情", "7*24小时", "智能助手"].map((t) => (
        <button key={t} type="button" className="border-r border-[#800000] px-[5px] whitespace-nowrap">
          {t}
        </button>
      ))}
      <div className="flex flex-1 items-center overflow-hidden text-[19px] font-bold whitespace-nowrap text-[#ffff00]">
        <span className="w-[412px] shrink-0">多措并举做好田间管理确保粮食丰收</span>
        <span className="w-[462px] shrink-0">想炒股先开户，手机超级Level-2限时领取</span>
        <span>13:34 法国外长视察停靠格陵兰岛的法军舰</span>
      </div>
      <input
        aria-label="代码/名称/简拼/功能"
        placeholder="代码/名称/简拼/功能"
        className="w-[423px] border border-[#c8c8c8] bg-[#b4b4b4] pl-2 text-[18px] placeholder:text-[#282828]"
      />
    </footer>
  );
}

export default function App() {
  return (
    <div className="relative flex min-h-screen flex-col overflow-hidden bg-black font-['Liberation_Sans','Noto_Sans_CJK_SC',sans-serif]">
      <TitleBar />
      <Toolbar />
      <main className="flex">
        <Sidebar />
        <section className="min-w-0 flex-1">
          <ChartHeader />
          <PriceChart />
          <div className="flex h-[31px] items-stretch justify-between border-t border-[#800000] text-[18px] leading-none">
            <p className="flex items-center whitespace-nowrap">
              <span className="mr-[5px] text-white">测试</span>
              <span className="text-white">获利线: +30.08</span><Up />
              <span className="text-[#ff00ff]">警戒线: +29.92</span><Up />
              <span className="text-[#00f000]">操作线: +26.13</span><Up />
            </p>
            <button type="button" className="mr-[79px] h-[29px] w-[99px] border border-t-0 border-[#800000] text-[#c0c0c0]">
              指标说明
            </button>
          </div>
          <IndicatorChart />
          <FormulaTabs />
        </section>
        <QuotePanel />
      </main>
      <IndexBar />
      <NewsBar />
      <div className="flex flex-1 bg-[#1b2c38]">
        <span className="ml-[44.3%] w-[11%] bg-[#4c5b66]" />
      </div>
      <div className="absolute right-[5px] bottom-[5px] z-20 flex h-[56px] w-[222px] flex-col items-center justify-center bg-white leading-none">
        <span className="text-[30px] leading-[30px] font-bold text-[#ff3a00]">股票公式指标网</span>
        <span className="font-['DejaVu_Sans'] text-[20px] leading-[22px] font-bold text-[#ffa000]">www.gszx.com.cn</span>
      </div>
    </div>
  );
}
